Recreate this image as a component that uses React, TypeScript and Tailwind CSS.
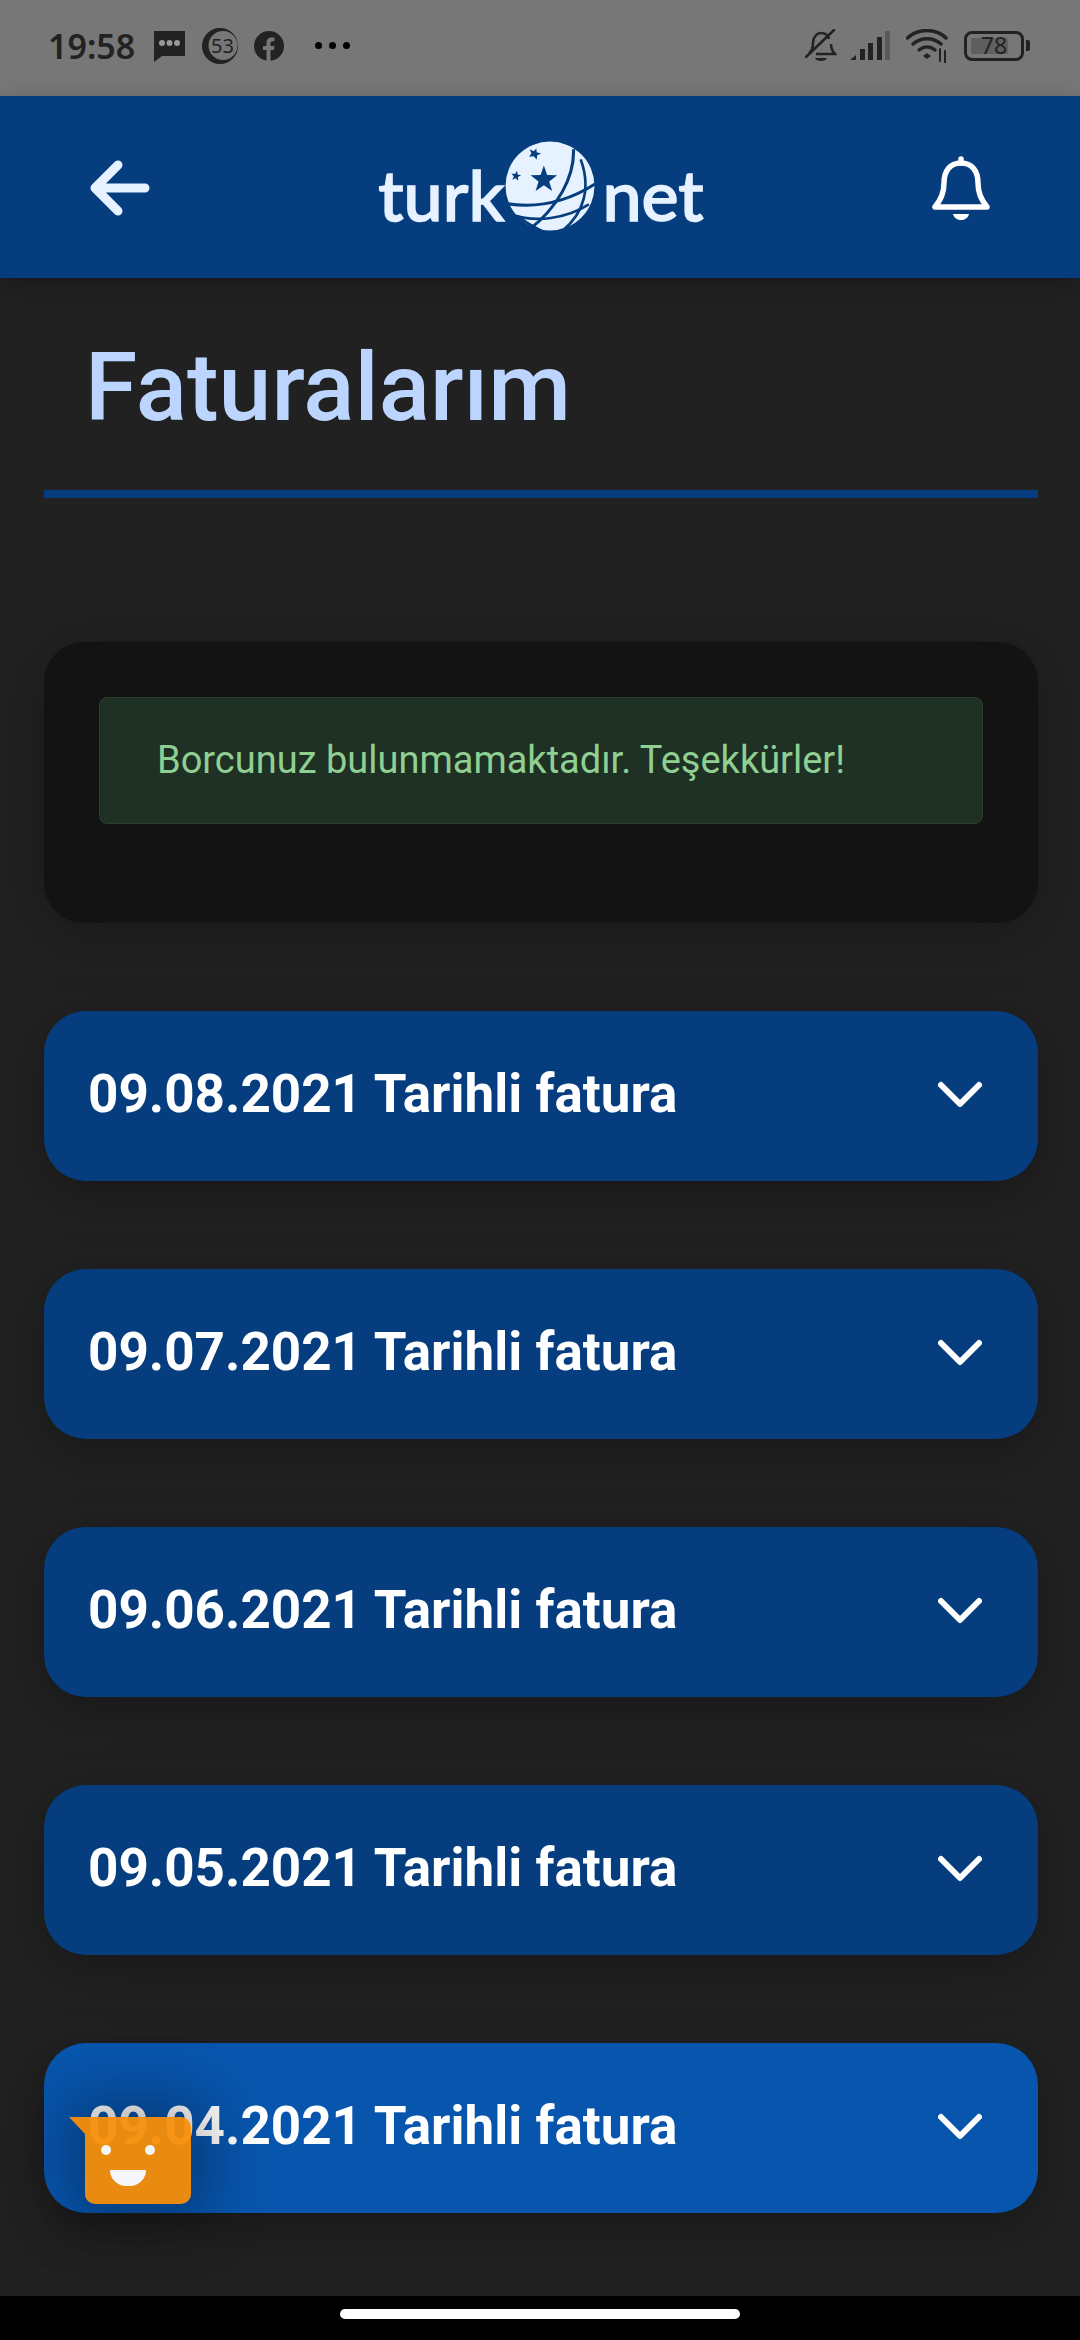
const invoices = ["09.08.2021", "09.07.2021", "09.06.2021", "09.05.2021", "09.04.2021"];

function StatusBar() {
  return (
    <div className="h-24 bg-[#777777] flex items-center pl-12 pr-[50px] pb-[5px] text-[#222222] shrink-0">
      <span className="font-['Noto_Sans',sans-serif] font-semibold text-[34px] leading-none w-[88px]">19:58</span>
      <svg className="ml-[17px]" width="33" height="33" viewBox="0 0 33 33">
        <path d="M1 2h31v25H9l-8 6z" fill="#222" />
        <circle cx="9" cy="14" r="3" fill="#999" />
        <circle cx="16.500" cy="14" r="3" fill="#999" />
        <circle cx="24" cy="14" r="3" fill="#999" />
      </svg>
      <div className="relative ml-4 w-9 h-9 flex items-center justify-center">
        <svg className="absolute inset-0" width="36" height="36" viewBox="0 0 36 36">
          <path fillRule="evenodd" d="M18 0a18 18 0 1 0 0 36 18 18 0 1 0 0-36zM21 3a14.500 14.500 0 1 1 0 29 14.500 14.500 0 1 1 0-29z" fill="#222" />
        </svg>
        <span className="relative font-['Noto_Sans',sans-serif] text-[20px] leading-none ml-[5px]">53</span>
      </div>
      <svg className="ml-4" width="30" height="30" viewBox="0 0 30 30">
        <circle cx="15" cy="15" r="15" fill="#222" />
        <path d="M12.500 30V19H9v-4h3.500v-3c0-3.600 2.100-5.500 5.300-5.500 1.500 0 2.700.1 2.700.1v3.600h-1.900c-1.700 0-2.100 1-2.100 2.100V15h4l-.6 4h-3.400v11z" fill="#777" />
      </svg>
      <div className="ml-[31px] flex gap-[7px]">
        <span className="w-[7px] h-[7px] rounded-full bg-black" />
        <span className="w-[7px] h-[7px] rounded-full bg-black" />
        <span className="w-[7px] h-[7px] rounded-full bg-black" />
      </div>
      <div className="ml-auto flex items-center">
        <svg width="32" height="34" viewBox="0 0 32 34" fill="none" stroke="#222" strokeWidth="2.500">
          <path d="M4 24c3-2 4-5 4-10 0-6 4-10 8-10 4 0 7 2 8 6M26 15c0 4 1 7 4 10H11" />
          <path d="M1 28 29 1" strokeLinecap="round" />
          <path d="M10 29h12c-1 4-11 4-12 0z" fill="#222" stroke="none" />
        </svg>
        <svg className="ml-[13px]" width="40" height="30" viewBox="0 0 40 30">
          <path d="M0 29l6-5v5z" fill="#222" />
          <rect x="10" y="18" width="5" height="11" fill="#222" />
          <rect x="18" y="12" width="5" height="17" fill="#222" />
          <rect x="27" y="6" width="5" height="23" fill="#222" />
          <rect x="35" y="0" width="5" height="29" fill="#5a5a5a" />
        </svg>
        <svg className="ml-4" width="42" height="34" viewBox="0 0 42 34" fill="none" stroke="#222" strokeWidth="3.500" strokeLinecap="round">
          <path d="M1.500 9C12-1 30-1 40 9" />
          <path d="M7 15c8-7 20-7 28 0" />
          <path d="M13 21c5-4 11-4 16 0" />
          <path d="M17 27l4-3 4 3-4 3z" fill="#222" stroke="none" />
          <path d="M34 20v12M39 22v12" strokeWidth="2" />
        </svg>
        <div className="ml-4 w-[60px] h-[30px] rounded-[8px] border-[3px] border-[#222] relative flex items-center justify-center">
          <span className="absolute left-[4px] top-[4px] bottom-[4px] w-[37px] rounded-[2px] bg-[#5f5f5f]" />
          <span className="relative font-['Noto_Sans',sans-serif] text-[23px] leading-none">78</span>
        </div>
        <span className="ml-[2px] w-[4px] h-[11px] rounded-r-[2px] bg-[#222]" />
      </div>
    </div>
  );
}

function Globe() {
  return (
    <svg width="90" height="90" viewBox="0 0 88 88" className="mx-[1px] mb-[2px]">
      <circle cx="44" cy="44" r="43.500" fill="#e6f2ff" />
      <g fill="none" stroke="#053d7e" strokeWidth="2.600">
        <path d="M0 61C30 66 60 60 88 42" strokeWidth="3" />
        <path d="M67 8C68 35 52 65 22 88" strokeWidth="3" />
        <path d="M74 18C84 45 78 70 56 88" />
        <path d="M7 72C30 80 60 76 82 62" />
        <path d="M12 73C20 80 28 84 40 90" />
      </g>
      <path d="M38 24l3.200 9.300 9.800.2-7.800 6 2.900 9.500-8.100-5.700-8.100 5.700 2.900-9.500-7.800-6 9.800-.2z" fill="#053d7e" />
      <path d="M29 7l1.500 3.500 4.500-.5-3 3 1 4-4-2-4 2 1-4-3-3 4.500.5z" fill="#053d7e" transform="rotate(20 29 12)" />
      <path d="M11 29l1.300 3.500 3.500.2-2.800 2.300 1 3.500-3-2-3 2 1-3.500-2.800-2.300 3.500-.2z" fill="#053d7e" transform="rotate(10 11 33)" />
    </svg>
  );
}

function Header() {
  return (
    <header className="relative z-10 h-[182px] bg-[#053d7e] shrink-0 flex items-center justify-between pl-[90px] pr-[90px] shadow-[0_8px_24px_rgba(0,0,0,0.25)]">
      <svg className="mt-[2px]" width="60" height="58" viewBox="0 0 60 58" fill="none" stroke="#e6f2ff" strokeWidth="9" strokeLinecap="round" strokeLinejoin="round">
        <path d="M5 29h50M28 6 5 29l23 23" />
      </svg>
      <div className="flex items-center text-[#e6f2ff] font-['Lato',sans-serif] font-medium text-[70px] leading-none [-webkit-text-stroke:1.5px_#e6f2ff]">
        <span className="pt-[14px]">turk</span>
        <Globe />
        <span className="pt-[14px] ml-[6px]">net</span>
      </div>
      <svg className="mt-[4px]" width="58" height="68" viewBox="0 0 58 68" fill="none" stroke="#fff" strokeWidth="5.500" strokeLinecap="round" strokeLinejoin="round">
        <path d="M29 8c-11 0-17 8-17 20 0 10-3 16-9 24h52c-6-8-9-14-9-24 0-12-6-20-17-20z" />
        <path d="M29 8V4" />
        <path d="M21 59h16c-2 8-14 8-16 0z" fill="#fff" stroke="none" />
      </svg>
    </header>
  );
}

function Chevron() {
  return (
    <svg width="44" height="28" viewBox="0 0 44 28" fill="none" stroke="#fff" strokeWidth="6" strokeLinecap="round" strokeLinejoin="round">
      <path d="M3 4l19 19L41 4" />
    </svg>
  );
}

function InvoiceRow({ date, active }: { date: string; active: boolean }) {
  return (
    <div className={`h-[170px] rounded-[42px] flex items-center justify-between pl-11 pr-[56px] pb-[3px] shadow-[0_14px_50px_rgba(0,0,0,0.28)] ${active ? "bg-[#0855ae]" : "bg-[#053d7e]"}`}>
      <span className="text-white font-bold text-[53px] leading-none">{date} Tarihli fatura</span>
      <Chevron />
    </div>
  );
}

export default function App() {
  return (
    <div className="relative w-[1080px] h-[2340px] flex flex-col bg-[#212121] font-['Roboto',sans-serif] overflow-hidden">
      <StatusBar />
      <Header />

      <main className="flex-1 pl-11 pr-[42px] flex flex-col">
        <div className="h-[220px] border-b-[8px] border-[#053d7e] flex items-start">
          <h1 className="pl-[41px] pt-[62px] text-[#bbd5ff] font-medium text-[95px] leading-none">Faturalarım</h1>
        </div>

        <section className="mt-[144px] h-[281px] rounded-[40px] bg-[#131313] p-[55px] shadow-[0_10px_60px_rgba(0,0,0,0.28)]">
          <div className="h-[127px] rounded-[8px] border border-[#2a3f2d] bg-[#1f3025] flex items-center pl-[57px] pb-[2px] text-[#8fcf92] text-[38px] leading-none">
            Borcunuz bulunmamaktadır. Teşekkürler!
          </div>
        </section>

        <div className="mt-[88px] flex flex-col gap-[88px]">
          {invoices.map((date, i) => (
            <InvoiceRow key={date} date={date} active={i === invoices.length - 1} />
          ))}
        </div>
      </main>

      <div className="h-11 bg-black shrink-0 flex justify-center pt-[13px]">
        <div className="w-[400px] h-[10px] rounded-full bg-white" />
      </div>

      {/* chat widget floats over the last row */}
      <div className="absolute left-[85px] top-[2117px] w-[106px] h-[87px] rounded-[10px] rounded-tl-none bg-[#f78e08]/95 shadow-[0_0_60px_20px_rgba(0,0,0,0.3)]">
        <span className="absolute -left-4 top-0 w-4 h-[17px] bg-[#f78e08]/95 [clip-path:polygon(0_0,100%_0,100%_100%)]" />
        <span className="absolute left-[16px] top-[28px] w-[10px] h-[10px] rounded-full bg-[#f5f6fa]" />
        <span className="absolute left-[60px] top-[28px] w-[10px] h-[10px] rounded-full bg-[#f5f6fa]" />
        <span className="absolute left-[25px] top-[53px] w-[36px] h-[16px] rounded-b-full bg-[#f5f6fa]" />
      </div>
    </div>
  );
}
